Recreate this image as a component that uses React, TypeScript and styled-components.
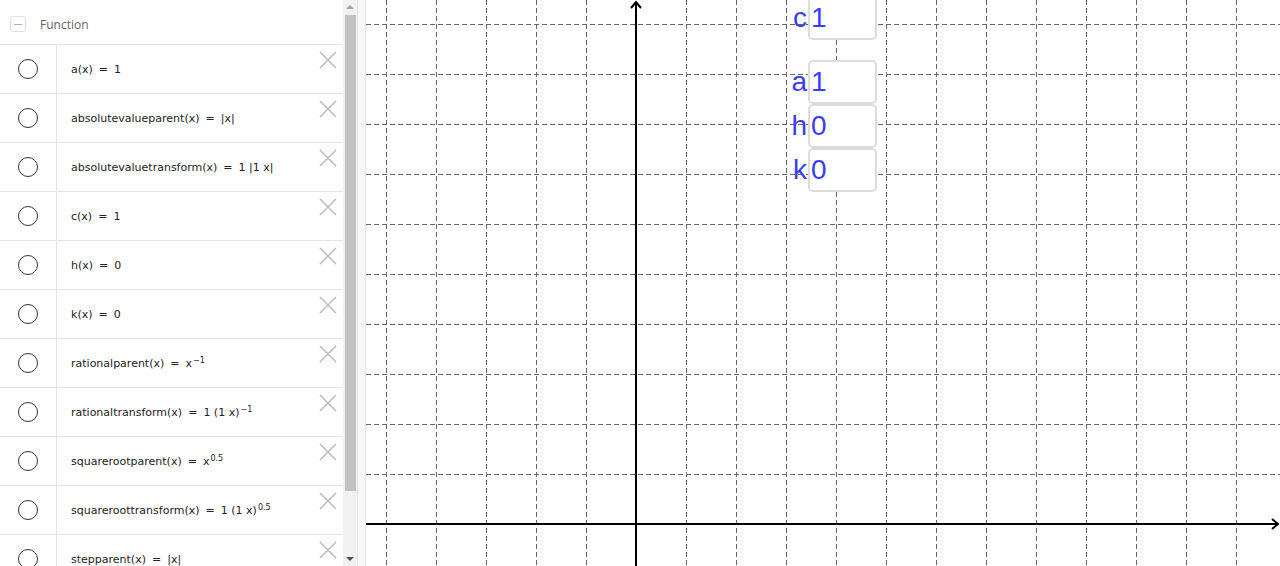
import * as React from "react";
import styled, { createGlobalStyle } from "styled-components";

const GlobalStyle = createGlobalStyle`
  html, body {
    margin: 0;
    padding: 0;
    background: #fff;
    overflow: hidden;
  }
  body {
    font-family: "Liberation Sans", Arial, sans-serif;
  }
`;

type Item = { name: string; rhs: React.ReactNode };

// built lazily so the styled Sup below is defined by then
const buildItems = (): Item[] => [
  { name: "a", rhs: "1" },
  { name: "absolutevalueparent", rhs: "|x|" },
  { name: "absolutevaluetransform", rhs: <>1 |1 x|</> },
  { name: "c", rhs: "1" },
  { name: "h", rhs: "0" },
  { name: "k", rhs: "0" },
  { name: "rationalparent", rhs: <>x<Sup>−1</Sup></> },
  { name: "rationaltransform", rhs: <>1 (1 x)<Sup>−1</Sup></> },
  { name: "squarerootparent", rhs: <>x<Sup>0.5</Sup></> },
  { name: "squareroottransform", rhs: <>1 (1 x)<Sup>0.5</Sup></> },
  { name: "stepparent", rhs: "|x|" },
];

const sliders = [
  { label: "c", value: "1", top: -4 },
  { label: "a", value: "1", top: 60 },
  { label: "h", value: "0", top: 104 },
  { label: "k", value: "0", top: 148 },
];

function CloseIcon() {
  return (
    <svg width="18" height="18" viewBox="0 0 18 18">
      <path d="M1 1 L17 17 M17 1 L1 17" stroke="#bdbdbd" strokeWidth="1.6" fill="none" />
    </svg>
  );
}

function AlgebraRow({ item }: { item: Item }) {
  return (
    <Row>
      <MarbleCell>
        <Marble />
      </MarbleCell>
      <Formula>
        {item.name}(x)<Eq>=</Eq>{item.rhs}
      </Formula>
      <CloseCell>
        <CloseIcon />
      </CloseCell>
    </Row>
  );
}

function Graph() {
  const w = 914;
  const h = 566;
  const ox = 270;
  const oy = 524;
  const verticals: number[] = [];
  for (let x = 20; x < w; x += 50) if (x !== ox) verticals.push(x);
  const horizontals: number[] = [];
  for (let y = 24; y < oy; y += 50) horizontals.push(y);

  return (
    <svg width={w} height={h} viewBox={`0 0 ${w} ${h}`}>
      <g stroke="#666" strokeWidth="1" strokeDasharray="5 3">
        {verticals.map((x) => (
          <line key={"v" + x} x1={x + 0.5} y1={0} x2={x + 0.5} y2={h} />
        ))}
        {horizontals.map((y) => (
          <line key={"h" + y} x1={0} y1={y + 0.5} x2={w} y2={y + 0.5} />
        ))}
      </g>
      <g stroke="#000" strokeWidth="2" fill="none">
        <line x1={ox} y1={h} x2={ox} y2={2} />
        <path d={`M${ox - 5} 8 L${ox} 2 L${ox + 5} 8`} />
        <line x1={0} y1={oy} x2={w - 2} y2={oy} />
        <path d={`M${w - 8} ${oy - 5} L${w - 2} ${oy} L${w - 8} ${oy + 5}`} />
      </g>
    </svg>
  );
}

export default function App() {
  const items = buildItems();
  return (
    <>
      <GlobalStyle />
      <Page>
        <Sidebar>
          <Header>
            <CollapseBox />
            <HeaderTitle>Function</HeaderTitle>
          </Header>
          {items.map((it) => (
            <AlgebraRow key={it.name} item={it} />
          ))}
        </Sidebar>
        <Scrollbar>
          <Arrow up />
          <Thumb />
          <Arrow />
        </Scrollbar>
        <Splitter />
        <Canvas>
          <Graph />
          {sliders.map((s) => (
            <Slider key={s.label} style={{ top: s.top }}>
              <SliderLabel>{s.label}</SliderLabel>
              <SliderBox>{s.value}</SliderBox>
            </Slider>
          ))}
        </Canvas>
      </Page>
    </>
  );
}

const Page = styled.div`
  display: flex;
  width: 1280px;
  height: 566px;
  overflow: hidden;
`;

const Sidebar = styled.div`
  width: 343px;
  flex: none;
  overflow: hidden;
  background: #fff;
`;

const Header = styled.div`
  height: 45px;
  border-bottom: 1px solid #e4e4e4;
  display: flex;
  align-items: center;
  padding-left: 10px;
  box-sizing: border-box;
  padding-top: 4px;
`;

const CollapseBox = styled.div`
  width: 16px;
  height: 16px;
  border: 1px solid #e0e0e0;
  border-radius: 3px;
  box-sizing: border-box;
  position: relative;
  margin-right: 14px;
  &::after {
    content: "";
    position: absolute;
    left: 3px;
    right: 3px;
    top: 7px;
    height: 1px;
    background: #b0b0b0;
  }
`;

const HeaderTitle = styled.span`
  font-family: "Open Sans", "Liberation Sans", sans-serif;
  font-size: 12px;
  color: #666;
`;

const Row = styled.div`
  display: grid;
  grid-template-columns: 57px 1fr 28px;
  height: 49px;
  box-sizing: border-box;
  border-bottom: 1px solid #e4e4e4;
`;

const MarbleCell = styled.div`
  border-right: 1px solid #e4e4e4;
  display: flex;
  align-items: center;
  justify-content: center;
`;

const Marble = styled.div`
  width: 20px;
  height: 20px;
  border: 1.3px solid #333;
  border-radius: 50%;
  box-sizing: border-box;
`;

const Formula = styled.div`
  display: flex;
  align-items: center;
  padding-left: 14px;
  font-family: "DejaVu Sans", sans-serif;
  font-size: 11px;
  color: #222;
  white-space: pre;
`;

const Eq = styled.span`
  margin: 0 6px;
`;

const Sup = styled.sup`
  font-size: 8px;
  position: relative;
  top: -3px;
  margin-left: 1px;
`;

const CloseCell = styled.div`
  display: flex;
  justify-content: center;
  padding-top: 6px;
  padding-right: 2px;
`;

const Scrollbar = styled.div`
  width: 14px;
  flex: none;
  background: #f1f1f1;
  display: flex;
  flex-direction: column;
  align-items: center;
`;

const Arrow = styled.div<{ up?: boolean }>`
  width: 0;
  height: 0;
  border-left: 4px solid transparent;
  border-right: 4px solid transparent;
  ${(p) =>
    p.up
      ? "border-bottom: 4px solid #a3a3a3; margin: 5px 0 6px;"
      : "border-top: 4px solid #505050; margin: 5px 0 5px;"}
`;

const Thumb = styled.div`
  width: 11px;
  height: 476px;
  background: #c1c1c1;
  margin-left: 1px;
  margin-bottom: auto;
`;

const Splitter = styled.div`
  width: 9px;
  flex: none;
  background: #f7f7f7;
  border-left: 1px solid #e6e6e6;
  border-right: 1px solid #e6e6e6;
  box-sizing: border-box;
`;

const Canvas = styled.div`
  position: relative;
  flex: 1;
  height: 566px;
  overflow: hidden;
  svg {
    display: block;
  }
`;

const Slider = styled.div`
  position: absolute;
  left: 421px;
  display: flex;
  align-items: center;
  color: #3c3cff;
  font-family: "Liberation Sans", Arial, sans-serif;
  font-size: 28px;
`;

const SliderLabel = styled.span`
  width: 20px;
  text-align: right;
  padding-right: 1px;
`;

const SliderBox = styled.div`
  width: 69px;
  height: 44px;
  box-sizing: border-box;
  border: 2px solid #dcdcdc;
  border-radius: 5px;
  background: #fff;
  display: flex;
  align-items: center;
  padding-left: 1px;
`;
